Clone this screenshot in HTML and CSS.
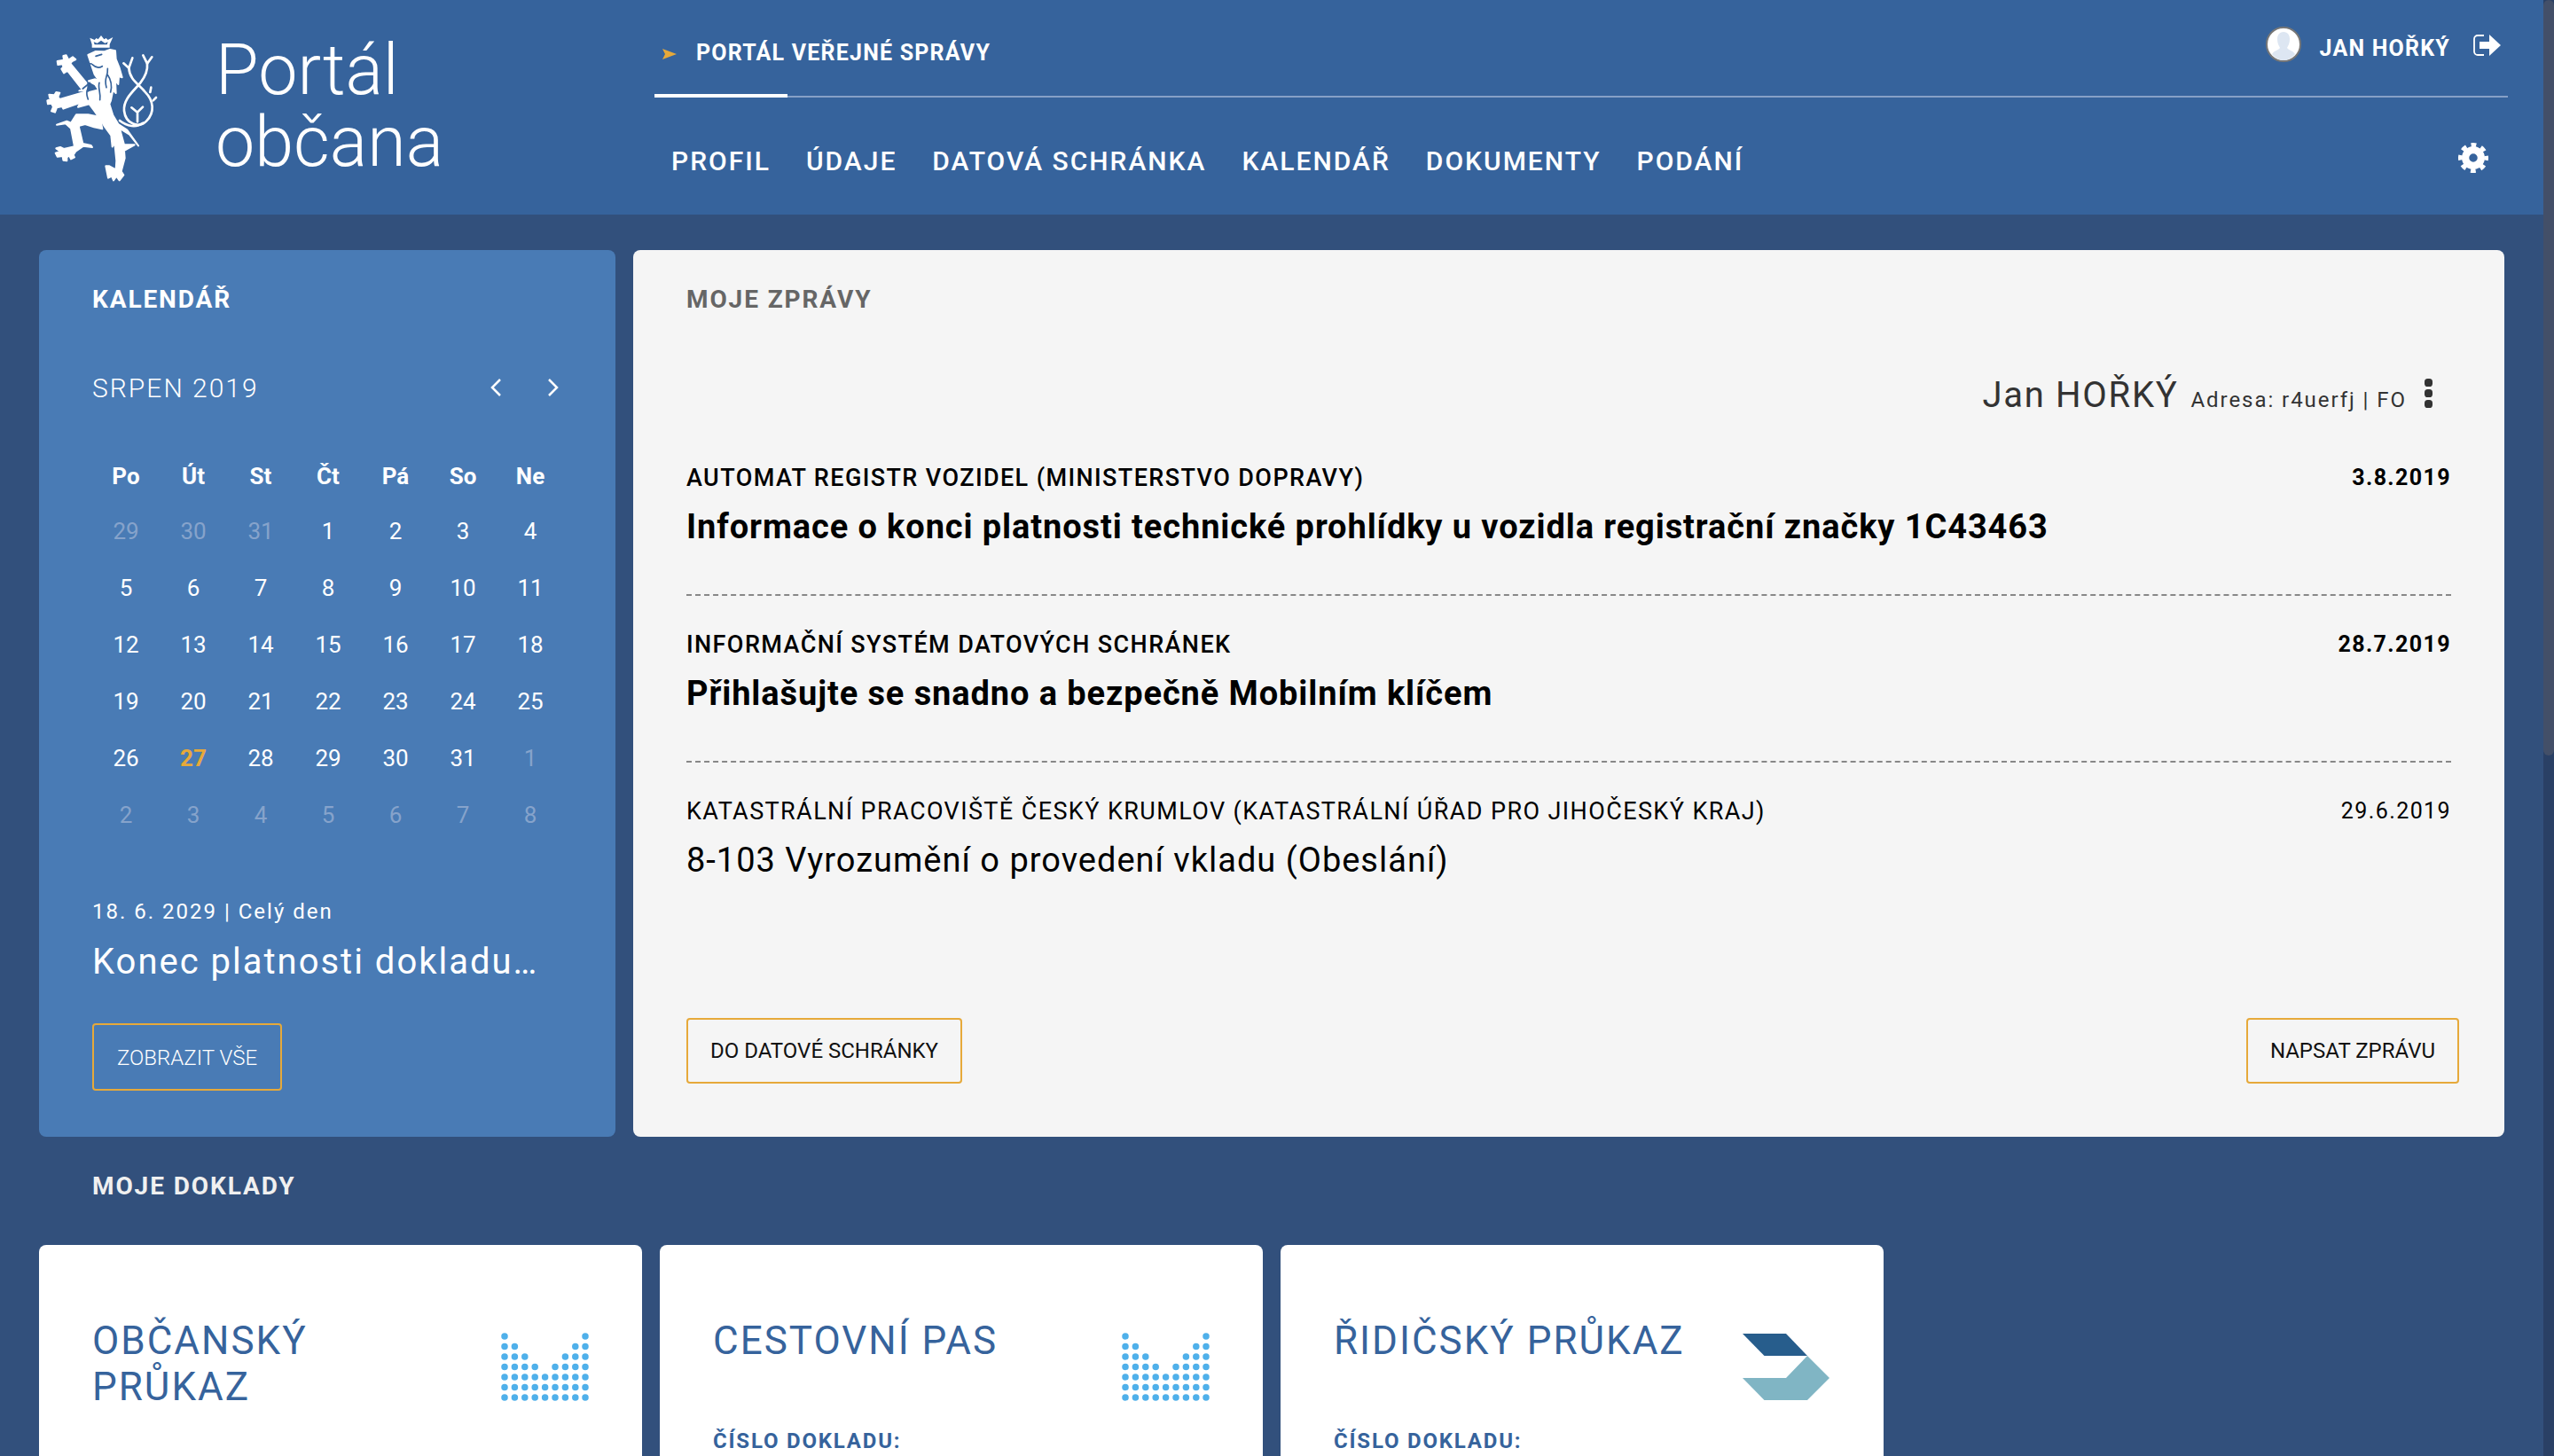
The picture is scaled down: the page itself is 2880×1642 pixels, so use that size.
FILE: index.html
```html
<!DOCTYPE html>
<html lang="cs">
<head>
  <meta charset="UTF-8">
  <meta name="viewport" content="width=device-width, initial-scale=1">
  <title>Portál občana</title>
  <link rel="stylesheet" href="styles.css">
</head>
<body>
  <div class="page">
    <div class="content">
      <header class="header">
        <div class="brand">
          <svg class="lion" viewBox="0 0 480 540" aria-label="Lev">
            <g fill="#fff" stroke="#fff" stroke-width="6" stroke-linejoin="round">
              <!-- koruna -->
              <path stroke="none" fill-rule="evenodd" d="M184 38l16 7 6-6 6 4 10-13 10 13 7-4 6 6 17-9-11 24v11h-60V60zM197 52l3 9h42l3-9-10 4-13-9-13 9z"/>
              <!-- hlava a telo -->
              <path d="M178 96l26-12 28 1 20-7 18 4 2 28 12 30 9 32-11-4-2 27-10-15 2 45-10-10-7 35-5 12 12 38 18 30 30 20 38 53-30-38-33-20 15 55h35l-35 20 2 25-12 45 8 12-14 18-10-14-10 14-6-14-12 6-8-40 12 0 22 12 2-30-6-60-8 12-4-38-22-30-8-14-26-38-18-24-38 10 18-36 20-14 32-8-12-18-22-12 22-6 14 6-16-22z"/>
              <!-- horni tlapa -->
              <path d="M172 190L118 125l6-8 12-6-10-8-14 10-8-16-10 2 2 14-22 4 2 12 16-2 2 10-6 6 8 14 12-8 50 64-10 4 24 0z"/>
              <!-- dolni tlapa -->
              <path d="M172 220L82 246l-6-8 6-14-12-2-6 10-18-2 2 10 8 4-16 6 2 12 12-2 6 12-6 14 12 4 6-16 18-4 4 8 80-28z"/>
              <!-- zadni noha -->
              <path d="M72 332l34-12 14 6 18-28 40 0 30 6 14 20 4 22-28-6-30-10-22 6 14 60 28 6 4 6-30-4-26 18-8 12 4 8-12 6-6-12-8 6 0 12-12-2-2-14-18 2-6-12 16-6-14-10 14-4 12 6 36-8-12-62-18-16z"/>
            </g>
            <g fill="none" stroke="#fff" stroke-width="8" stroke-linecap="round">
              <!-- ocas -->
              <path d="M316 140c2 40 34 55 54 80 30 30 35 70 5 100-25 25-70 10-75-35-4-40 35-70 55-95 20-25 25-45 23-65"/>
              <path d="M285 318c25 20 55 25 80 8M345 322v-32M316 140l-18-16M316 140l12-34M378 125l-14-28M378 125l16-22M345 290l-20-16M345 290l18-18M388 222l3-16M398 250l10-10"/>
            </g>
            <g fill="none" stroke="#36639c" stroke-width="5" stroke-linecap="round">
              <!-- kresba hlavy a hrive -->
              <path d="M150 100c-4 16 18 26 40 26M204 100l20-6M192 128c12 12 24 12 34 6M244 142c2 30-14 30-4 64M216 190c-6 18 6 34 2 58M190 200c-18 6-20 24-12 46M242 160c14 20 18 40 12 62M160 210l24-20"/>
            </g>
          </svg>
          <div class="brand-title">Portál<br>občana</div>
        </div>
        <div class="header-nav">
          <div class="topbar">
            <div class="portal-link">
              <svg class="portal-arrow" viewBox="0 0 16 12"><path d="M0 0l16 6-16 6 3-6z"/></svg>
              <span>PORTÁL VEŘEJNÉ SPRÁVY</span>
            </div>
            <div class="user">
              <svg class="avatar" viewBox="0 0 40 40">
                <circle cx="20" cy="20" r="19" fill="#fff" stroke="#777" stroke-width="2"/>
                <path fill="#dde6f2" d="M20 6c-5 0-7 4-7 8 0 5 2 8 3 10-2 3-7 3-9 7 3 4 8 7 13 7s10-3 13-7c-2-4-7-4-9-7 1-2 3-5 3-10 0-4-2-8-7-8z"/>
              </svg>
              <span class="user-name">JAN HOŘKÝ</span>
              <svg class="logout" viewBox="0 0 31 24">
                <path fill="none" stroke="#fff" stroke-width="1.8" d="M12 1H5C2.800 1 1 2.800 1 5v14c0 2.200 1.800 4 4 4h7"/>
                <path fill="#fff" d="M7 8h11V0l13 12-13 12v-8H7z"/>
              </svg>
            </div>
          </div>
          <nav class="mainnav">
            <a>PROFIL</a>
            <a>ÚDAJE</a>
            <a>DATOVÁ SCHRÁNKA</a>
            <a>KALENDÁŘ</a>
            <a>DOKUMENTY</a>
            <a>PODÁNÍ</a>
            <svg class="gear" viewBox="0 0 100 100">
              <circle cx="50" cy="50" r="26" fill="none" stroke="#fff" stroke-width="24"/>
              <circle cx="50" cy="50" r="43" fill="none" stroke="#fff" stroke-width="14" stroke-dasharray="17 16.77" stroke-dashoffset="8.5"/>
            </svg>
          </nav>
        </div>
      </header>

      <main class="main">
        <div class="top-row">
          <section class="card calendar">
            <h2 class="card-title">KALENDÁŘ</h2>
            <div class="month-row">
              <span class="month">SRPEN 2019</span>
              <div class="month-arrows">
                <svg viewBox="0 0 14 22"><path d="M12 2L3 11l9 9"/></svg>
                <svg viewBox="0 0 14 22"><path d="M2 2l9 9-9 9"/></svg>
              </div>
            </div>
            <div class="cal-grid">
              <b>Po</b><b>Út</b><b>St</b><b>Čt</b><b>Pá</b><b>So</b><b>Ne</b>
              <span class="off">29</span><span class="off">30</span><span class="off">31</span><span>1</span><span>2</span><span>3</span><span>4</span>
              <span>5</span><span>6</span><span>7</span><span>8</span><span>9</span><span>10</span><span>11</span>
              <span>12</span><span>13</span><span>14</span><span>15</span><span>16</span><span>17</span><span>18</span>
              <span>19</span><span>20</span><span>21</span><span>22</span><span>23</span><span>24</span><span>25</span>
              <span>26</span><span class="today">27</span><span>28</span><span>29</span><span>30</span><span>31</span><span class="off">1</span>
              <span class="off">2</span><span class="off">3</span><span class="off">4</span><span class="off">5</span><span class="off">6</span><span class="off">7</span><span class="off">8</span>
            </div>
            <div class="event-date">18. 6. 2029 | Celý den</div>
            <div class="event-name">Konec platnosti dokladu…</div>
            <a class="btn btn-light">ZOBRAZIT VŠE</a>
          </section>

          <section class="card messages">
            <h2 class="card-title">MOJE ZPRÁVY</h2>
            <div class="box-owner">
              <span class="owner-name">Jan HOŘKÝ</span>
              <span class="owner-addr">Adresa: r4uerfj | FO</span>
              <span class="owner-menu"><i></i><i></i><i></i></span>
            </div>
            <article class="msg unread">
              <div class="msg-head"><span>AUTOMAT REGISTR VOZIDEL (MINISTERSTVO DOPRAVY)</span><span class="msg-date">3.8.2019</span></div>
              <div class="msg-title">Informace o konci platnosti technické prohlídky u vozidla registrační značky 1C43463</div>
            </article>
            <article class="msg unread">
              <div class="msg-head"><span>INFORMAČNÍ SYSTÉM DATOVÝCH SCHRÁNEK</span><span class="msg-date">28.7.2019</span></div>
              <div class="msg-title">Přihlašujte se snadno a bezpečně Mobilním klíčem</div>
            </article>
            <article class="msg">
              <div class="msg-head"><span>KATASTRÁLNÍ PRACOVIŠTĚ ČESKÝ KRUMLOV (KATASTRÁLNÍ ÚŘAD PRO JIHOČESKÝ KRAJ)</span><span class="msg-date">29.6.2019</span></div>
              <div class="msg-title">8-103 Vyrozumění o provedení vkladu (Obeslání)</div>
            </article>
            <div class="msg-actions">
              <a class="btn">DO DATOVÉ SCHRÁNKY</a>
              <a class="btn">NAPSAT ZPRÁVU</a>
            </div>
          </section>
        </div>

        <h2 class="docs-title">MOJE DOKLADY</h2>
        <div class="docs">
          <section class="doc">
            <div class="doc-text">
              <h3>OBČANSKÝ PRŮKAZ</h3>
            </div>
            <svg class="doc-icon" viewBox="0 0 99 77"><use href="#dots"/></svg>
          </section>
          <section class="doc">
            <div class="doc-text">
              <h3>CESTOVNÍ PAS</h3>
              <div class="doc-label">ČÍSLO DOKLADU:</div>
            </div>
            <svg class="doc-icon" viewBox="0 0 99 77"><use href="#dots"/></svg>
          </section>
          <section class="doc">
            <div class="doc-text">
              <h3>ŘIDIČSKÝ PRŮKAZ</h3>
              <div class="doc-label">ČÍSLO DOKLADU:</div>
            </div>
            <svg class="doc-icon" viewBox="0 0 99 77">
              <path fill="#275d8c" d="M0 1h49l24 25H24.500z"/>
              <path fill="#80b5c4" d="M73 26l25 25-25 25H24.500L0 51h49z"/>
            </svg>
          </section>
        </div>
      </main>
    </div>
    <div class="scrollbar"><div class="scrollbar-thumb"></div></div>
  </div>

  <svg class="defs" width="0" height="0">
    <defs>
      <path id="dots" fill="none" stroke="#4fb0ea" stroke-width="7.5" stroke-linecap="round" stroke-dasharray="0 11.5" d="M4 4V73.500M15.400 15.500V73.500M26.800 27V73.500M38.200 38.500V73.500M49.600 50V73.500M61 38.500V73.500M72.400 27V73.500M83.800 15.500V73.500M95 4V73.500"/>
    </defs>
  </svg>
</body>
</html>
```

FILE: styles.css
```css
* {
  margin: 0;
  padding: 0;
  box-sizing: border-box;
}

body {
  font-family: Roboto, sans-serif;
  background-color: #32507c;
  color: #fff;
  overflow: hidden;
}

.page {
  display: flex;
  height: 1642px;
  overflow: hidden;
}

.content {
  flex: 1;
  min-width: 0;
}

.scrollbar {
  width: 12px;
  background-color: #2a4065;
}

.scrollbar-thumb {
  height: 852px;
  background-color: #434f68;
  border-radius: 6px;
}

.defs {
  position: absolute;
}

/* hlavicka */
.header {
  display: flex;
  height: 242px;
  background-color: #36639c;
}

.brand {
  display: flex;
  align-items: flex-start;
  padding: 30px 0 0 40px;
}

.lion {
  width: 160px;
  height: 180px;
}

.brand-title {
  margin: 9px 0 0 43px;
  font-size: 79px;
  font-weight: 300;
  line-height: 81px;
}

.header-nav {
  width: 2090px;
  margin: 0 40px 0 auto;
}

.topbar {
  position: relative;
  display: flex;
  justify-content: space-between;
  height: 110px;
  border-bottom: 2px solid #86a0c6;
}

.topbar::after {
  content: "";
  position: absolute;
  left: 0;
  bottom: -2px;
  width: 150px;
  height: 4px;
  background-color: #fff;
}

.portal-link {
  display: flex;
  align-items: center;
  height: 32px;
  margin-top: 43px;
  padding-left: 9px;
  font-size: 25px;
  font-weight: 700;
  letter-spacing: 1.2px;
}

.portal-arrow {
  width: 16px;
  height: 12px;
  margin: 4px 22px 0 0;
  fill: #e6a93a;
}

.user {
  display: flex;
  align-items: center;
  height: 40px;
  margin: 30px 8px 0 0;
}

.avatar {
  width: 40px;
  height: 40px;
}

.user-name {
  margin: 8px 26px 0 21px;
  font-size: 25px;
  font-weight: 700;
  letter-spacing: 1.2px;
}

.logout {
  width: 31px;
  height: 24px;
  margin-top: 2px;
}

.mainnav {
  display: flex;
  align-items: center;
  height: 44px;
  margin: 49px 0 0 -1px;
}

.mainnav a {
  padding: 0 20px;
  font-size: 30px;
  font-weight: 500;
  letter-spacing: 2px;
  white-space: nowrap;
}

.gear {
  width: 34px;
  height: 34px;
  margin: -6px 22px 0 auto;
}

/* obsah */
.main {
  padding: 40px 44px 0;
}

.top-row {
  display: grid;
  grid-template-columns: 650px 1fr;
  gap: 20px;
}

.card {
  height: 1000px;
  border-radius: 8px;
  padding: 40px 60px 0;
}

.card-title {
  font-size: 28px;
  font-weight: 700;
  line-height: 32px;
  letter-spacing: 1.9px;
}

.calendar {
  background-color: #497bb5;
}

.month-row {
  display: flex;
  justify-content: space-between;
  align-items: center;
  height: 40px;
  margin-top: 63px;
}

.month {
  font-size: 30px;
  font-weight: 300;
  letter-spacing: 2px;
}

.month-arrows {
  display: flex;
  gap: 51px;
  margin-right: 3px;
}

.month-arrows svg {
  width: 14px;
  height: 22px;
  fill: none;
  stroke: #fff;
  stroke-width: 2.5;
}

.cal-grid {
  display: grid;
  grid-template-columns: repeat(7, 76px);
  grid-template-rows: 62px repeat(6, 64px);
  margin-top: 48px;
  text-align: center;
  font-size: 26px;
  align-items: center;
}

.cal-grid b {
  padding-top: 2px;
  font-weight: 700;
}

.cal-grid span {
  font-weight: 400;
}

.cal-grid .off {
  color: #86a3cb;
}

.cal-grid .today {
  color: #e6a93a;
  font-weight: 700;
}

.event-date {
  margin-top: 61px;
  font-size: 24px;
  line-height: 32px;
  letter-spacing: 2px;
}

.event-name {
  margin-top: 15px;
  font-size: 40px;
  line-height: 52px;
  letter-spacing: 2px;
  white-space: nowrap;
}

.btn {
  display: inline-flex;
  align-items: center;
  height: 74px;
  padding: 0 25px;
  border: 2px solid #e6a93a;
  border-radius: 4px;
  font-size: 24px;
  color: #111;
  white-space: nowrap;
}

.btn-light {
  margin-top: 43px;
  height: 76px;
  padding: 2px 26px 0;
  color: #fff;
  font-weight: 300;
}

.messages {
  display: flex;
  flex-direction: column;
  background-color: #f5f5f5;
  color: #000;
}

.messages .card-title {
  color: #666;
}

.box-owner {
  display: flex;
  justify-content: flex-end;
  align-items: baseline;
  height: 48px;
  margin: 66px 21px 0 0;
  color: #333;
}

.owner-name {
  font-size: 40px;
  line-height: 52px;
  letter-spacing: 1.7px;
}

.owner-addr {
  margin-left: 14px;
  font-size: 24px;
  letter-spacing: 1.95px;
}

.owner-menu {
  display: flex;
  flex-direction: column;
  gap: 3px;
  align-self: flex-start;
  margin: 7px 0 0 20px;
}

.owner-menu i {
  width: 9px;
  height: 9px;
  border-radius: 40%;
  background-color: #333;
}

.msg {
  padding-bottom: 50px;
  margin-top: 55px;
  border-bottom: 2px dashed #888;
}

.msg + .msg {
  margin-top: 39px;
}

.msg:last-of-type {
  border-bottom: 0;
}

.msg-head {
  display: flex;
  justify-content: space-between;
  font-size: 27px;
  line-height: 32px;
  letter-spacing: 1.4px;
}

.msg-date {
  font-size: 25px;
}

.msg-title {
  margin-top: 13px;
  font-size: 38px;
  line-height: 52px;
  letter-spacing: 1px;
}

.unread .msg-head {
  font-weight: 500;
}

.unread .msg-date {
  font-weight: 700;
}

.unread .msg-title {
  font-weight: 700;
  letter-spacing: 0.9px;
}

.msg-actions {
  display: flex;
  justify-content: space-between;
  margin: auto -9px 60px 0;
}

/* doklady */
.docs-title {
  margin: 40px 0 0 60px;
  font-size: 28px;
  font-weight: 700;
  line-height: 32px;
  letter-spacing: 1.9px;
  color: #f0f0f0;
}

.docs {
  display: grid;
  grid-template-columns: repeat(4, 680px);
  gap: 20px;
  margin-top: 50px;
}

.doc {
  display: flex;
  justify-content: space-between;
  align-items: flex-start;
  min-height: 400px;
  padding: 82px 60px 0;
  background-color: #fff;
  border-radius: 8px;
  color: #36639c;
}

.doc h3 {
  max-width: 420px;
  font-size: 44px;
  font-weight: 400;
  line-height: 52px;
  letter-spacing: 2px;
}

.doc-label {
  margin-top: 73px;
  font-size: 24px;
  font-weight: 700;
  letter-spacing: 1.8px;
}

.doc-icon {
  width: 99px;
  height: 77px;
  margin-top: 17px;
  flex-shrink: 0;
}
```
